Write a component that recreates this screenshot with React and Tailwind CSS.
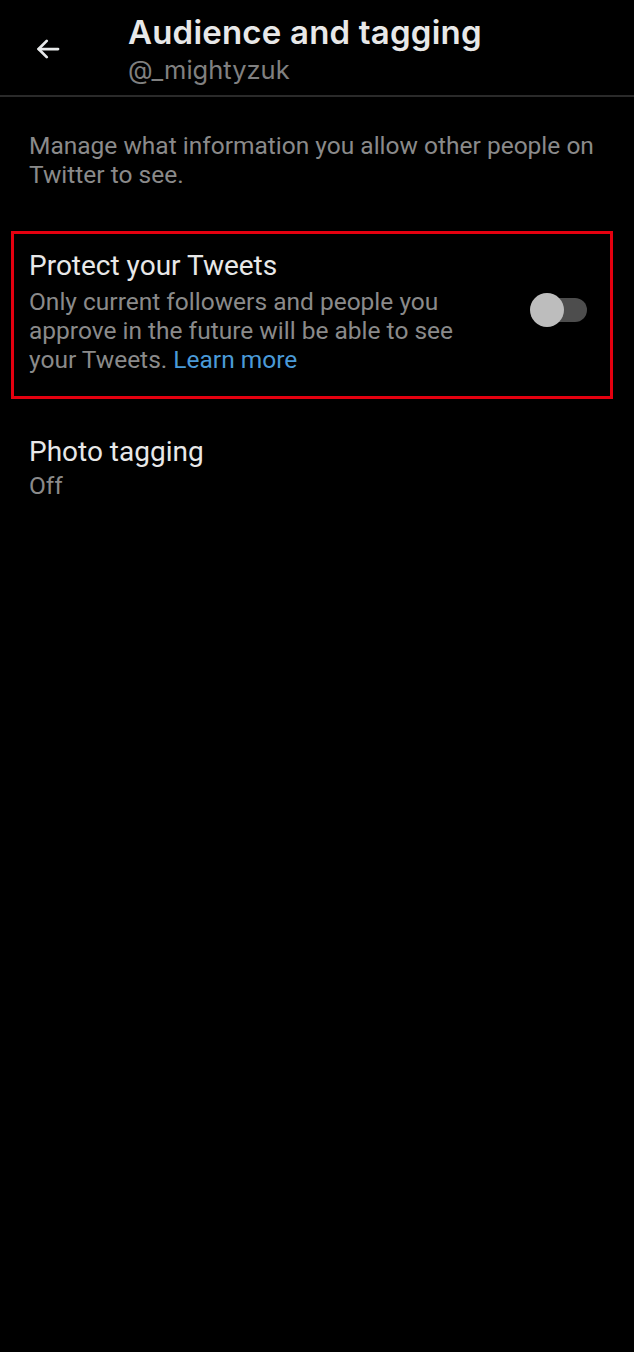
import React from 'react'

const BackArrow = () => (
  <svg width="30" height="30" viewBox="0 0 24 24" fill="none" stroke="#e7e9ea" strokeWidth="2.2" strokeLinecap="round" strokeLinejoin="round">
    <path d="M20 12H4.5" />
    <path d="M11 5.5L4.5 12l6.5 6.5" />
  </svg>
)

const Toggle = () => (
  <div className="relative w-[57px] h-[34px] flex items-center">
    <div className="absolute left-[6px] right-0 h-[24px] rounded-full bg-[#4d4d4d]" />
    <div className="absolute left-0 w-[34px] h-[34px] rounded-full bg-[#bdbdbd]" />
  </div>
)

export default function App() {
  return (
    <div className="min-h-[1352px] w-full bg-black text-[#e7e9ea]" style={{ fontFamily: 'Roboto, "Noto Sans", sans-serif' }}>
      <header className="flex items-start h-[97px] border-b-2 border-[#2a2a2a]">
        <div className="w-[128px] pl-[33px] pt-[34px]"><BackArrow /></div>
        <div className="pt-[12px]">
          <h1 className="text-[33px] leading-[40px] font-semibold tracking-[0.2px] text-[#e8e8e8]" style={{ fontFamily: 'Inter, sans-serif' }}>Audience and tagging</h1>
          <p className="mt-[3px] text-[25.5px] leading-[30px] text-[#808080]" style={{ fontFamily: 'Inter, sans-serif' }}>@_mightyzuk</p>
        </div>
      </header>

      <p className="px-[29px] pt-[34px] text-[24.5px] leading-[29px] text-[#8a8a8a]">
        Manage what information you allow other people on Twitter to see.
      </p>

      <div className="ml-[11px] mr-[21px] mt-[42px] border-[3px] border-[#e5000f] flex items-start pl-[15px] pr-[23px] pt-[15px] pb-[22px]">
        <div className="flex-1">
          <h2 className="text-[28px] leading-[34px] text-[#e8e8e8]">Protect your Tweets</h2>
          <p className="mt-[4px] text-[24.5px] leading-[29px] text-[#8a8a8a] w-[470px]">
            Only current followers and people you approve in the future will be able to see your Tweets. <span className="text-[#4a9ad8]">Learn more</span>
          </p>
        </div>
        <div className="mt-[44px]"><Toggle /></div>
      </div>

      <div className="px-[29px] pt-[36px]">
        <h2 className="text-[28px] leading-[34px] text-[#e8e8e8]">Photo tagging</h2>
        <p className="text-[24.5px] leading-[34px] text-[#8a8a8a]">Off</p>
      </div>
    </div>
  )
}
